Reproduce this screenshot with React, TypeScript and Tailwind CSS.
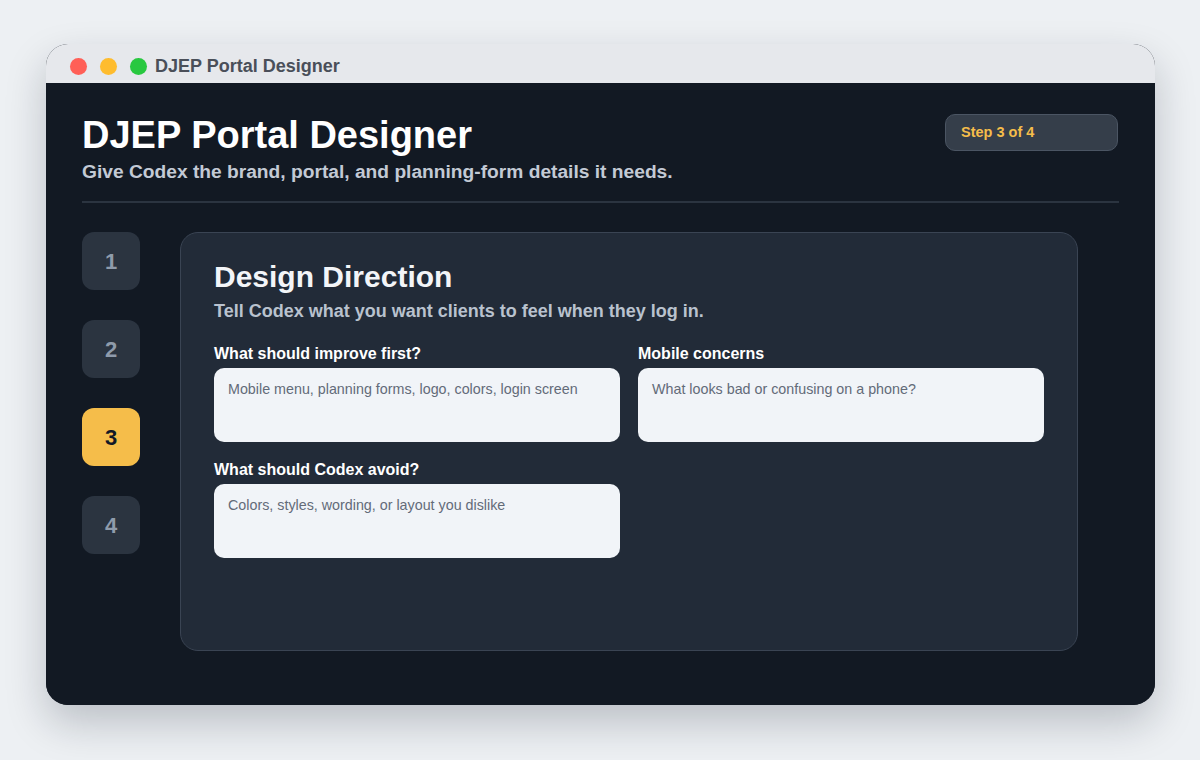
import { useState } from 'react';

const steps = [1, 2, 3, 4];

const Field = ({ label, placeholder }: { label: string; placeholder: string }) => (
  <label className="flex flex-col">
    <span className="text-[16px] leading-[18px] font-bold text-white mb-[5px]">{label}</span>
    <textarea
      placeholder={placeholder}
      className="h-[74px] w-full resize-none rounded-[10px] bg-[#f1f4f8] px-[14px] pt-[12px] pb-[10px] text-[14.3px] leading-[18px] text-[#1f2937] placeholder:text-[#636b78] outline-none"
    />
  </label>
);

const App = () => {
  const [current] = useState(3);

  return (
    <div className="w-full min-h-screen bg-[#edf0f3] pt-[44px] pl-[46px] font-['Liberation_Sans',Arial,sans-serif]">
      <div className="w-[1109px] h-[661px] rounded-[22px] overflow-hidden bg-[#111820] shadow-[0_18px_40px_rgba(15,23,42,0.22)] flex flex-col">
        {/* barre de titre */}
        <div className="h-[39px] bg-[#e6e8ec] flex items-center pl-[24px] pt-[5px]">
          <div className="flex gap-[13px]">
            <span className="w-[17px] h-[17px] rounded-full bg-[#ff5f57]" />
            <span className="w-[17px] h-[17px] rounded-full bg-[#febc2e]" />
            <span className="w-[17px] h-[17px] rounded-full bg-[#28c840]" />
          </div>
          <span className="ml-[8px] text-[18px] font-bold text-[#4a4f59]">DJEP Portal Designer</span>
        </div>

        <div className="flex-1 bg-[#121923] px-[36px] pt-[29px]">
          {/* en-tête */}
          <div className="flex justify-between items-start">
            <div>
              <h1 className="text-[38px] leading-[46px] font-bold text-white">DJEP Portal Designer</h1>
              <p className="mt-[2px] text-[19.2px] leading-[24px] font-bold text-[#c3cad5]">
                Give Codex the brand, portal, and planning-form details it needs.
              </p>
            </div>
            <div className="mt-[2px] mr-[1px] w-[173px] h-[37px] rounded-[10px] border border-[#4b5563] bg-[#353e4a] flex items-center px-[15px]">
              <span className="text-[14.5px] font-bold text-[#f5bd4a]">Step {current} of 4</span>
            </div>
          </div>
          <div className="mt-[17px] h-[2px] bg-[#2b3440]" />

          {/* corps */}
          <div className="mt-[29px] flex gap-[40px]">
            <div className="flex flex-col gap-[30px]">
              {steps.map((s) => (
                <div
                  key={s}
                  className={
                    s === current
                      ? 'w-[58px] h-[58px] rounded-[12px] bg-[#f5bd4a] flex items-center justify-center text-[22px] font-bold text-[#111827]'
                      : 'w-[58px] h-[58px] rounded-[12px] bg-[#2b3440] flex items-center justify-center text-[22px] font-bold text-[#8f9bab]'
                  }
                >
                  {s}
                </div>
              ))}
            </div>

            <div className="w-[898px] h-[419px] rounded-[18px] border border-[#3a4453] bg-[#222b38] px-[33px] pt-[26px]">
              <h2 className="text-[30px] leading-[36px] font-bold text-[#f3f5f8]">Design Direction</h2>
              <p className="mt-[5px] text-[18px] leading-[22px] font-bold text-[#b9c2ce]">
                Tell Codex what you want clients to feel when they log in.
              </p>
              <div className="mt-[23px] grid grid-cols-2 gap-x-[18px] gap-y-[19px]">
                <Field label="What should improve first?" placeholder="Mobile menu, planning forms, logo, colors, login screen" />
                <Field label="Mobile concerns" placeholder="What looks bad or confusing on a phone?" />
                <Field label="What should Codex avoid?" placeholder="Colors, styles, wording, or layout you dislike" />
              </div>
            </div>
          </div>
        </div>
      </div>
    </div>
  );
};

export default App;
